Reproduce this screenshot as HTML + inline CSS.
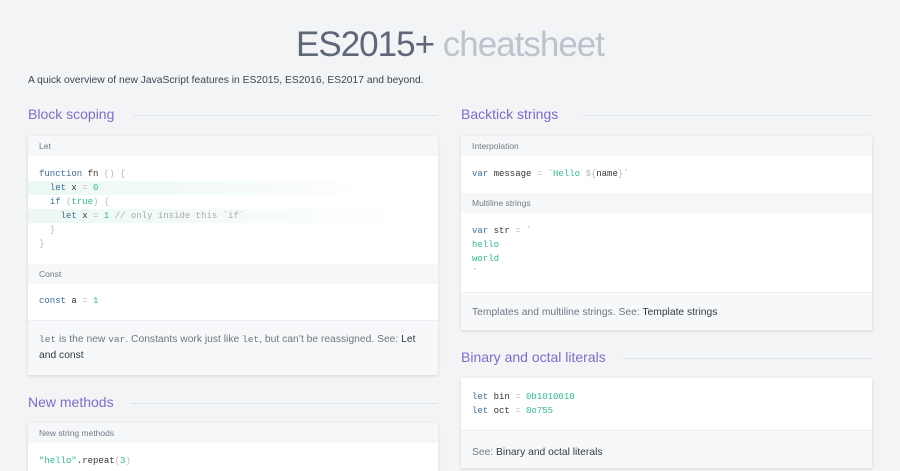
<!DOCTYPE html>
<html><head><meta charset="utf-8"><style>
*{box-sizing:border-box;margin:0;padding:0}
html,body{width:900px;height:471px;overflow:hidden}
body{background:#f3f4f6;font-family:"Liberation Sans",sans-serif;color:#3a4454;position:relative}
.abs{position:absolute}
h1{position:absolute;top:25px;left:0;width:900px;text-align:center;font-weight:300;font-size:35px;color:#5d6778;letter-spacing:-1px}
h1 span{color:#bcc3cd}
.sub{top:75px;left:28px;font-size:10.3px;color:#3d4451}
.h2{font-size:14px;color:#7f6ccb}
.line{height:1px;background:#e0e3e8}
.card{background:#fff;box-shadow:0 1px 3px rgba(0,0,0,.12);overflow:hidden}
.hd{height:20px;background:#f6f7f9;font-size:8.5px;color:#717987;padding:5px 11px 0}
.code{font-family:"Liberation Mono",monospace;font-size:9px;line-height:14px;padding:10px 11px;color:#333;white-space:pre}
.ft{background:#f7f8fa;font-size:10.3px;color:#6e7684;padding:12px 11px;line-height:16px;border-top:1px solid #eceef1}
.ft b{font-weight:normal;color:#333b48}
.k{color:#3b6e9c}.n{color:#2ebd91}.p{color:#b4bac2}.c{color:#a5abb3}
.hl{background:linear-gradient(90deg,#ecf8f3,#f7fcfa 70%,#fff)}
</style></head><body>
<h1>ES2015+ <span>cheatsheet</span></h1>
<div class="abs sub">A quick overview of new JavaScript features in ES2015, ES2016, ES2017 and beyond.</div>

<div class="abs h2" style="left:28px;top:106px">Block scoping</div>
<div class="abs line" style="left:134px;top:115px;width:304px"></div>
<div class="abs card" style="left:28px;top:136px;width:410px;height:239px">
<div class="hd">Let</div>
<div class="code" style="padding-top:11px;padding-bottom:13px"><span class="k">function</span> fn <span class="p">() {</span>
<span class="hl" style="display:inline-block;width:340px;margin-left:-11px;padding-left:11px">  <span class="k">let</span> x <span class="p">=</span> <span class="n">0</span></span>
  <span class="k">if</span> <span class="p">(</span><span class="n">true</span><span class="p">) {</span>
<span class="hl" style="display:inline-block;width:370px;margin-left:-11px;padding-left:11px">    <span class="k">let</span> x <span class="p">=</span> <span class="n">1</span> <span class="c">// only inside this `if`</span></span>
  <span class="p">}</span>
<span class="p">}</span></div>
<div class="hd">Const</div>
<div class="code" style="padding-top:10px;padding-bottom:12px"><span class="k">const</span> a <span class="p">=</span> <span class="n">1</span></div>
<div class="ft" style="padding-top:11px;height:60px"><span style="font-family:'Liberation Mono',monospace;font-size:9.5px">let</span> is the new <span style="font-family:'Liberation Mono',monospace;font-size:9.5px">var</span>. Constants work just like <span style="font-family:'Liberation Mono',monospace;font-size:9.5px">let</span>, but can’t be reassigned. See: <b>Let and const</b></div>
</div>

<div class="abs h2" style="left:28px;top:394px">New methods</div>
<div class="abs line" style="left:130px;top:403px;width:308px"></div>
<div class="abs card" style="left:28px;top:423px;width:410px;height:60px">
<div class="hd">New string methods</div>
<div class="code" style="padding-top:11px"><span class="n">"hello"</span>.repeat<span class="p">(</span><span class="n">3</span><span class="p">)</span></div>
</div>

<div class="abs h2" style="left:461px;top:106px">Backtick strings</div>
<div class="abs line" style="left:583px;top:115px;width:289px"></div>
<div class="abs card" style="left:461px;top:136px;width:411px;height:194px">
<div class="hd">Interpolation</div>
<div class="code" style="padding-top:11px;padding-bottom:12px"><span class="k">var</span> message <span class="p">=</span> <span class="n">`Hello </span><span class="p">${</span>name<span class="p">}</span><span class="n">`</span></div>
<div class="hd">Multiline strings</div>
<div class="code" style="padding-top:11px;padding-bottom:12px"><span class="k">var</span> str <span class="p">=</span> <span class="n">`</span>
<span class="n">hello</span>
<span class="n">world</span>
<span class="n">`</span></div>
<div class="ft" style="height:44px;padding-top:12px">Templates and multiline strings. See: <b>Template strings</b></div>
</div>

<div class="abs h2" style="left:461px;top:349px">Binary and octal literals</div>
<div class="abs line" style="left:623px;top:358px;width:249px"></div>
<div class="abs card" style="left:461px;top:378px;width:411px;height:90px">
<div class="code" style="padding-top:12px;padding-bottom:12px"><span class="k">let</span> bin <span class="p">=</span> <span class="n">0b1010010</span>
<span class="k">let</span> oct <span class="p">=</span> <span class="n">0o755</span></div>
<div class="ft" style="height:40px;padding-top:14px">See: <b>Binary and octal literals</b></div>
</div>
</body></html>
